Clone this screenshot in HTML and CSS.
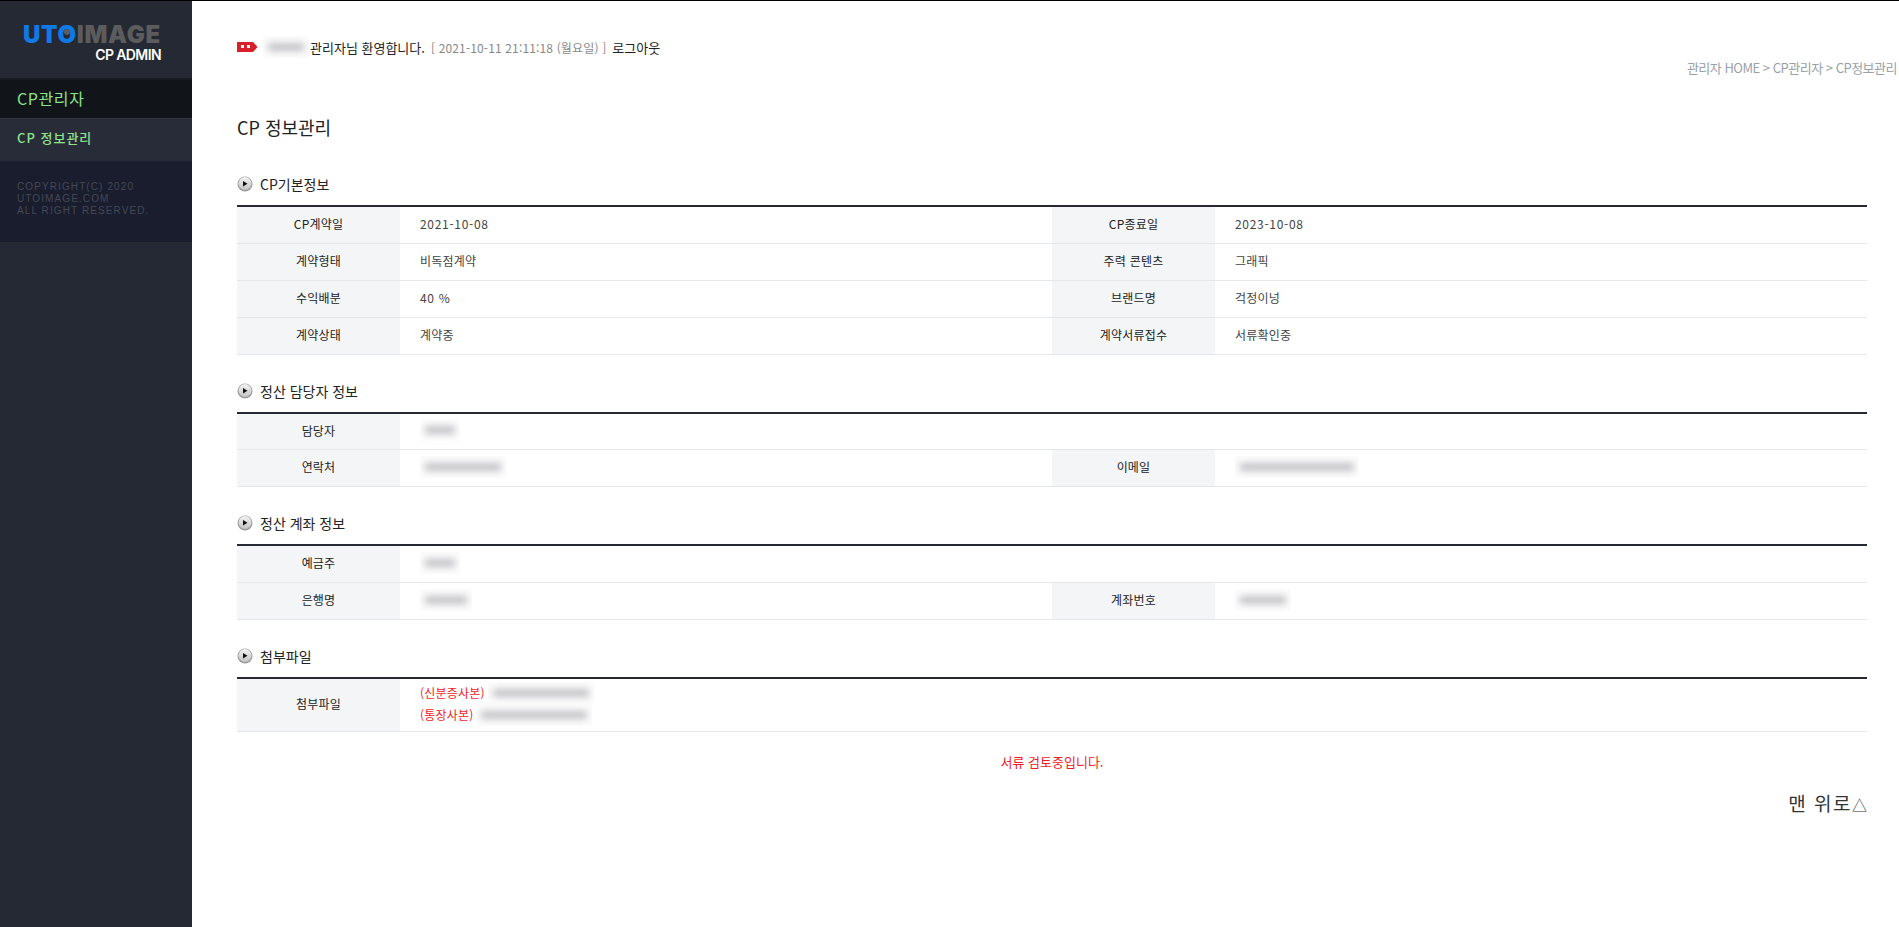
FILE: index.html
```html
<!DOCTYPE html>
<html lang="ko">
<head>
    <meta charset="UTF-8">
    <meta name="viewport" content="width=device-width, initial-scale=1.0">
    <title>CP 정보관리</title>
    <link rel="stylesheet" href="styles.css">
</head>
<body>
    <div class="wrap">
        <aside class="sidebar">
            <div class="logo">
                <div class="logo-main"><span class="logo-uto">UT<span class="logo-o">O</span></span><span class="logo-image">IMAGE</span></div>
                <div class="logo-sub">CP ADMIN</div>
            </div>
            <div class="menu-title">CP관리자</div>
            <div class="menu-item">CP 정보관리</div>
            <div class="copyright">COPYRIGHT(C) 2020<br>UTOIMAGE.COM<br>ALL RIGHT RESERVED.</div>
        </aside>
        <main class="main">
            <div class="topbar">
                <svg class="tag" width="21" height="10" viewBox="0 0 21 10"><path d="M0 0H16L20.5 5L16 10H0Z" fill="#d9202a"/><rect x="4" y="3" width="3" height="3" fill="#fff"/><rect x="10" y="3" width="3" height="3" fill="#fff"/></svg>
                <span class="blur-box name-blur"><i></i></span>
                <span class="welcome">관리자님 환영합니다.</span>
                <span class="clock">[ 2021-10-11 21:11:18 (월요일) ]</span>
                <a class="logout" href="#">로그아웃</a>
            </div>
            <div class="breadcrumb">관리자 HOME &gt; CP관리자 &gt; CP정보관리</div>
            <h1 class="page-title">CP 정보관리</h1>

            <section class="section">
                <h2 class="sec-title">
                    <svg class="bullet" width="16" height="16" viewBox="0 0 16 16"><use href="#bullet-icon"/></svg>
                    CP기본정보
                </h2>
                <table class="info">
                    <colgroup><col class="col-th"><col class="col-td"><col class="col-th"><col class="col-td"></colgroup>
                    <tr><th>CP계약일</th><td class="num">2021-10-08</td><th>CP종료일</th><td class="num">2023-10-08</td></tr>
                    <tr><th>계약형태</th><td>비독점계약</td><th>주력 콘텐츠</th><td>그래픽</td></tr>
                    <tr><th>수익배분</th><td class="num">40 %</td><th>브랜드명</th><td>걱정이넝</td></tr>
                    <tr><th>계약상태</th><td>계약중</td><th>계약서류접수</th><td>서류확인중</td></tr>
                </table>
            </section>

            <section class="section">
                <h2 class="sec-title">
                    <svg class="bullet" width="16" height="16" viewBox="0 0 16 16"><use href="#bullet-icon"/></svg>
                    정산 담당자 정보
                </h2>
                <table class="info">
                    <colgroup><col class="col-th"><col class="col-td"><col class="col-th"><col class="col-td"></colgroup>
                    <tr class="short"><th>담당자</th><td colspan="3"><span class="blur-box w36"><i></i></span></td></tr>
                    <tr><th>연락처</th><td><span class="blur-box w80"><i></i></span></td><th>이메일</th><td><span class="blur-box w120"><i></i></span></td></tr>
                </table>
            </section>

            <section class="section">
                <h2 class="sec-title">
                    <svg class="bullet" width="16" height="16" viewBox="0 0 16 16"><use href="#bullet-icon"/></svg>
                    정산 계좌 정보
                </h2>
                <table class="info">
                    <colgroup><col class="col-th"><col class="col-td"><col class="col-th"><col class="col-td"></colgroup>
                    <tr><th>예금주</th><td colspan="3"><span class="blur-box w36"><i></i></span></td></tr>
                    <tr><th>은행명</th><td><span class="blur-box w46"><i></i></span></td><th>계좌번호</th><td><span class="blur-box w54"><i></i></span></td></tr>
                </table>
            </section>

            <section class="section">
                <h2 class="sec-title">
                    <svg class="bullet" width="16" height="16" viewBox="0 0 16 16"><use href="#bullet-icon"/></svg>
                    첨부파일
                </h2>
                <table class="info">
                    <colgroup><col class="col-th"><col class="col-td"><col class="col-th"><col class="col-td"></colgroup>
                    <tr class="files">
                        <th>첨부파일</th>
                        <td colspan="3">
                            <div class="file-line"><span class="red">(신분증사본)</span><span class="blur-box w100"><i></i></span></div>
                            <div class="file-line"><span class="red">(통장사본)</span><span class="blur-box w110"><i></i></span></div>
                        </td>
                    </tr>
                </table>
            </section>

            <p class="notice">서류 검토중입니다.</p>
            <div class="to-top"><a href="#">맨 위로<span class="to-top-mark">△</span></a></div>
        </main>
    </div>

    <svg class="defs" width="0" height="0">
        <defs>
            <linearGradient id="bullet-grad" x1="0" y1="0" x2="0" y2="1">
                <stop offset="0" stop-color="#f4f4f4"/>
                <stop offset="1" stop-color="#c4c4c4"/>
            </linearGradient>
            <g id="bullet-icon">
                <circle cx="8" cy="8" r="7.5" fill="#9a9a9a"/>
                <circle cx="8" cy="7.5" r="6.5" fill="url(#bullet-grad)"/>
                <path d="M6 5L10.5 7.7L6 10.4Z" fill="#111"/>
            </g>
        </defs>
    </svg>
</body>
</html>
```

FILE: styles.css
```css
html, body {
    margin: 0;
    padding: 0;
    height: 100%;
    background: #fff;
    font-family: "Noto Sans CJK KR", "Noto Sans", sans-serif;
    font-size: 12px;
    color: #333;
}
a {
    color: inherit;
    text-decoration: none;
}
.wrap {
    display: flex;
    min-height: 927px;
    border-top: 1px solid #000;
    box-sizing: border-box;
}
.defs {
    position: absolute;
}

/* sidebar */
.sidebar {
    width: 192px;
    flex: none;
    background: #252933;
}
.logo {
    box-sizing: border-box;
    height: 79px;
    padding: 22px 31px 0 23px;
    border-bottom: 2px solid #181b22;
}
.logo-main {
    font-family: Inter, sans-serif;
    font-weight: 900;
    font-size: 24px;
    line-height: 24px;
    letter-spacing: 0.7px;
    white-space: nowrap;
}
.logo-uto {
    color: #0f7ae5;
}
.logo-o {
    position: relative;
}
.logo-o::after {
    content: "";
    position: absolute;
    left: 7px;
    top: 9px;
    width: 6px;
    height: 6px;
    border-radius: 50%;
    background: #5c5c5e;
}
.logo-image {
    color: #5c5c5e;
}
.logo-sub {
    font-family: Inter, sans-serif;
    font-weight: 600;
    font-size: 14px;
    line-height: 16px;
    letter-spacing: -0.6px;
    color: #fff;
    text-align: right;
}
.menu-title {
    height: 38px;
    line-height: 36px;
    padding-left: 17px;
    background: #111418;
    color: #8fe38a;
    font-size: 16px;
    letter-spacing: 0.6px;
    border-bottom: 1px solid #32363f;
}
.menu-item {
    height: 42px;
    line-height: 38px;
    padding-left: 17px;
    background: #282c38;
    color: #8fe38a;
    font-size: 13px;
    font-weight: 500;
    letter-spacing: 1px;
    box-sizing: border-box;
}
.copyright {
    height: 81px;
    box-sizing: border-box;
    padding: 20px 0 0 17px;
    background: #1a1d2d;
    color: #444857;
    font-family: "Liberation Sans", Arial, sans-serif;
    font-size: 10px;
    line-height: 12px;
    letter-spacing: 1.1px;
}

/* main */
.main {
    flex: 1;
    padding: 0 2px 0 45px;
}
.topbar {
    display: flex;
    align-items: center;
    height: 20px;
    margin-top: 36px;
    font-size: 13px;
    color: #222;
}
.tag {
    margin-right: 5px;
}
.welcome {
    margin-left: 1px;
    margin-right: 6px;
}
.clock {
    color: #888;
    font-size: 12px;
    letter-spacing: 0.15px;
    margin-right: 6px;
}
.logout {
    color: #222;
}
.breadcrumb {
    text-align: right;
    color: #9a9fa8;
    font-size: 13px;
    letter-spacing: -0.5px;
    line-height: 18px;
    margin-top: 2px;
}
.page-title {
    font-size: 18px;
    font-weight: 400;
    color: #222;
    line-height: 26px;
    margin: 37px 0 0;
}
.section {
    margin: 25px 30px 0 0;
}
.page-title + .section {
    margin-top: 33px;
}
.sec-title {
    display: flex;
    align-items: center;
    gap: 7px;
    height: 22px;
    margin: 0 0 10px;
    font-size: 14px;
    font-weight: 400;
    color: #222;
}
.bullet {
    flex: none;
}

/* info tables */
.info {
    width: 100%;
    table-layout: fixed;
    border-collapse: separate;
    border-spacing: 0;
    border-top: 2px solid #252933;
}
.col-th {
    width: 10%;
}
.col-td {
    width: 40%;
}
.info th, .info td {
    height: 33px;
    padding: 0 0 3px;
    border-bottom: 1px solid #e5e7ea;
    font-size: 12px;
    font-weight: 400;
    letter-spacing: 0.2px;
}
.info th {
    background: #f4f5f7;
    color: #222;
    text-align: center;
}
.info td {
    padding-left: 20px;
    color: #444;
}
.info .num {
    letter-spacing: 0.7px;
}
.short th, .short td {
    height: 32px;
}
.files th, .files td {
    height: 49px;
}
.file-line {
    display: flex;
    align-items: center;
    gap: 3px;
    height: 22px;
}
.red {
    color: #f01c24;
}

/* blurred private values */
.blur-box {
    display: inline-block;
    vertical-align: middle;
    height: 22px;
    background: #fcfcfc;
    overflow: hidden;
}
.blur-box i {
    display: block;
    height: 8px;
    margin: 7px 5px;
    background: #c2c2c6;
    filter: blur(3.5px);
}
.name-blur {
    width: 46px;
    flex: none;
}
.w36 { width: 40px; }
.w46 { width: 52px; }
.w54 { width: 56px; }
.w80 { width: 86px; }
.w100 { width: 106px; }
.w110 { width: 116px; }
.w120 { width: 124px; }

.notice {
    margin: 21px 30px 0 0;
    text-align: center;
    color: #f01c24;
    font-size: 13px;
    line-height: 18px;
}
.to-top {
    margin: 19px 30px 0 0;
    text-align: right;
    font-size: 19px;
    letter-spacing: 1.5px;
    line-height: 26px;
    color: #333;
}
.to-top-mark {
    font-size: 15px;
    letter-spacing: 0;
}
```
